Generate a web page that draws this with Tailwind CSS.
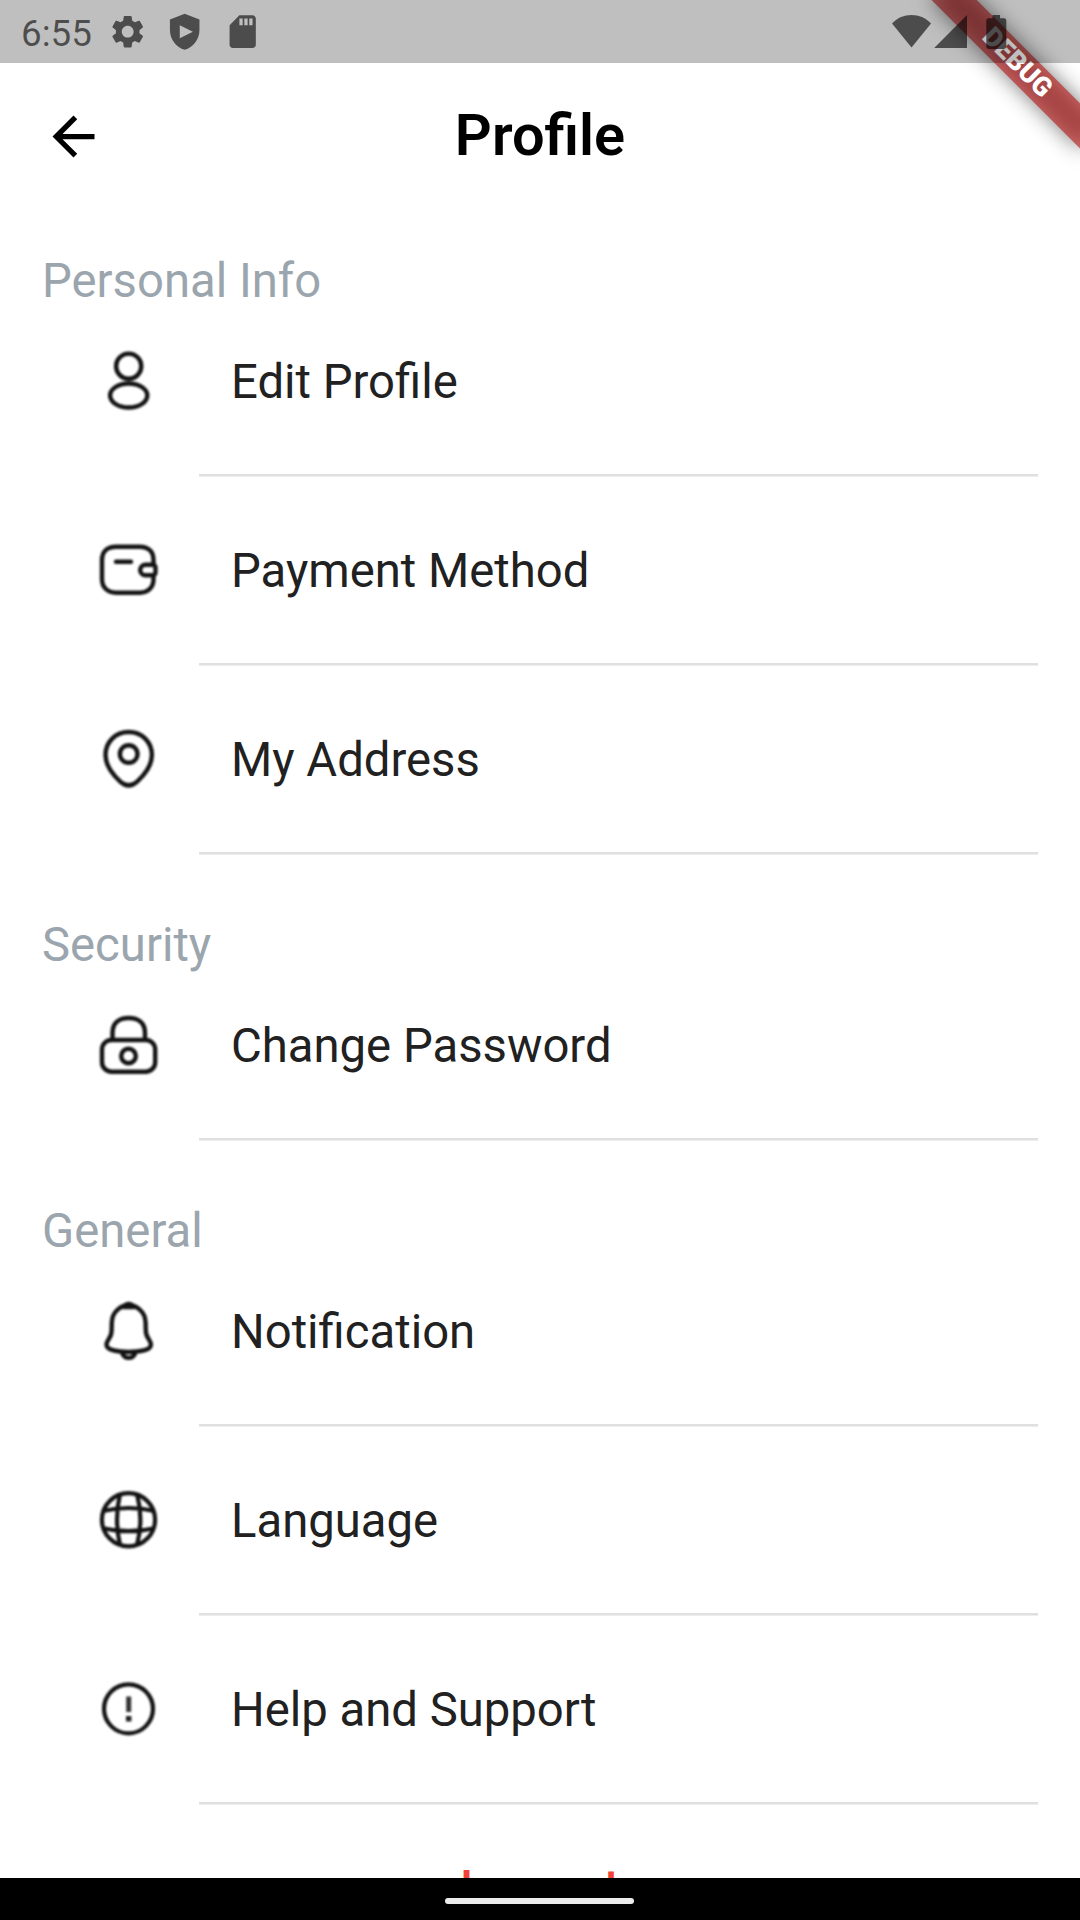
<!DOCTYPE html>
<html lang="en">
<head>
<meta charset="utf-8">
<title>Profile</title>
<script src="https://cdn.jsdelivr.net/npm/@tailwindcss/browser@4"></script>
</head>
<body class="bg-white">
<div class="relative flex h-[1920px] w-[1080px] flex-col overflow-hidden bg-white font-[Roboto,sans-serif] text-[47.25px] leading-[56px] text-[#212121]">

  <!-- Debug ribbon -->
  <div class="absolute left-[975px] top-[73px] h-[31.5px] w-[210px] origin-[105px_-73px] rotate-45">
    <div class="absolute inset-0 bg-black/50 blur-[10.4px]"></div>
    <div class="absolute inset-0 flex items-center justify-center bg-[#b71c1c]/63 text-[26.8px] leading-none font-black text-white">DEBUG</div>
  </div>

  <!-- Status bar -->
  <div class="relative flex h-[63px] shrink-0 items-center bg-black/25 pl-[21px] text-black/60">
    <span class="w-[86.5px] pt-[3px] text-[36.75px] leading-[43px]">6:55</span>
    <svg class="size-[39.4px]" viewBox="0 0 24 24" fill="currentColor"><path d="M19.14 12.94c.04-.3.06-.61.06-.94 0-.32-.02-.64-.07-.94l2.03-1.58c.18-.14.23-.41.12-.61l-1.92-3.32c-.12-.22-.37-.29-.59-.22l-2.39.96c-.5-.38-1.03-.7-1.62-.94l-.36-2.54c-.04-.24-.24-.41-.48-.41h-3.84c-.24 0-.43.17-.47.41l-.36 2.54c-.59.24-1.13.57-1.62.94l-2.39-.96c-.22-.08-.47 0-.59.22L2.74 8.87c-.12.21-.08.47.12.61l2.03 1.58c-.05.3-.09.63-.09.94s.02.64.07.94l-2.03 1.58c-.18.14-.23.41-.12.61l1.92 3.32c.12.22.37.29.59.22l2.39-.96c.5.38 1.03.7 1.62.94l.36 2.54c.05.24.24.41.48.41h3.84c.24 0 .44-.17.47-.41l.36-2.54c.59-.24 1.13-.56 1.62-.94l2.39.96c.22.08.47 0 .59-.22l1.92-3.32c.12-.22.07-.47-.12-.61l-2.01-1.58zM12 15.6c-1.98 0-3.6-1.62-3.6-3.6s1.62-3.6 3.6-3.6 3.6 1.62 3.6 3.6-1.62 3.6-3.6 3.6z"/></svg>
    <svg class="ml-[18.6px] size-[39.4px]" viewBox="0 0 24 24" fill="currentColor" fill-rule="evenodd"><path d="M12 1 3 4.600v6.400c0 5.550 3.840 10.740 9 12 5.160-1.260 9-6.450 9-12V4.600zM9 8v8l8-4z"/></svg>
    <svg class="ml-[18.6px] size-[39.4px]" viewBox="0 0 24 24" fill="currentColor"><path d="M18 2h-8L4.020 8 4 20c0 1.100.9 2 2 2h12c1.100 0 2-.9 2-2V4c0-1.100-.9-2-2-2zm-6 6h-2V4h2v4zm3 0h-2V4h2v4zm3 0h-2V4h2v4z"/></svg>
    <div class="ml-auto flex items-center pr-[73px] pb-[2px]">
      <svg class="h-[36px] w-[40px]" viewBox="0 0 40 36" fill="currentColor"><path d="M19.500 34.500 0 10.500C5.500 4.800 12 2 19.500 2s14 2.800 19.500 8.500z"/></svg>
      <svg class="ml-[2px] h-[36px] w-[34px]" viewBox="0 0 34 36" fill="currentColor"><path d="M33 2v33H.2z"/></svg>
      <svg class="ml-[18px] h-[36px] w-[21px]" viewBox="0 0 21 36" fill="currentColor"><path d="M6.500 2h7.500v3.300h4a2.300 2.300 0 0 1 2.300 2.300v26a2.300 2.300 0 0 1-2.300 2.300H2.600a2.300 2.300 0 0 1-2.300-2.300v-26a2.300 2.300 0 0 1 2.300-2.300h3.900z"/></svg>
    </div>
  </div>

  <!-- App bar -->
  <header class="grid h-[147px] shrink-0 grid-cols-[1fr_auto_1fr] items-center px-[42px]">
    <svg class="size-[63px]" viewBox="0 0 24 24" fill="#000"><path d="M20 11H7.830l5.590-5.590L12 4l-8 8 8 8 1.410-1.410L7.830 13H20v-2z"/></svg>
    <h1 class="pb-[4px] text-[57.75px] leading-[68px] font-semibold text-black">Profile</h1>
    <span></span>
  </header>

  <main class="flex h-[1668px] shrink-0 flex-col overflow-hidden pt-[43px]">
    <section class="flex flex-col">
      <h2 class="px-[42px] text-[#9ba5ad]">Personal Info</h2>
      <div class="mt-[15px] flex flex-col gap-9">
        <div>
          <div class="flex h-[113px] items-center pl-[97px]">
            <svg class="size-[63px] blur-[0.8px]" viewBox="0 0 63 63" fill="none" stroke="#111" stroke-width="4.400"><circle cx="31.700" cy="17.200" r="12.600"/><ellipse cx="31.700" cy="46.500" rx="18.600" ry="12"/></svg>
            <span class="ml-[71px] pt-[2px]">Edit Profile</span>
          </div>
          <div class="mt-[37px] mr-[42px] ml-[199px] h-[3px] border-b border-[#ededed] bg-[#e0e0e0]"></div>
        </div>
        <div>
          <div class="flex h-[113px] items-center pl-[97px]">
            <svg class="size-[63px] blur-[0.8px]" viewBox="0 0 63 63" fill="none" stroke="#111" stroke-width="4.400"><path d="M56.500 26V22C56.500 13 50.500 8.700 43 8.700H19C10.500 8.700 5 13.500 5 22v19C5 49.500 10.500 54.700 19 54.700h24c7.500 0 13.500-4.700 13.500-13.700v-4"/><path d="M48.500 26.700h7.200a2.800 2.800 0 0 1 2.800 2.800v5a2.800 2.800 0 0 1-2.800 2.800h-7.200a5.300 5.300 0 0 1 0-10.600z"/><path d="M19 23.700h15" stroke-linecap="round"/></svg>
            <span class="ml-[71px] pt-[2px]">Payment Method</span>
          </div>
          <div class="mt-[37px] mr-[42px] ml-[199px] h-[3px] border-b border-[#ededed] bg-[#e0e0e0]"></div>
        </div>
        <div>
          <div class="flex h-[113px] items-center pl-[97px]">
            <svg class="size-[63px] blur-[0.8px]" viewBox="0 0 63 63" fill="none" stroke="#111" stroke-width="4.400"><path d="M31.700 5C18.500 5 8.500 15 8.500 28c0 10.500 7.500 20 15 26.800 5.500 4.800 10.900 4.800 16.400 0 7.500-6.800 15-16.300 15-26.800 0-13-10-23-23.200-23z"/><circle cx="31.700" cy="27" r="8.800"/></svg>
            <span class="ml-[71px] pt-[2px]">My Address</span>
          </div>
          <div class="mt-[37px] mr-[42px] ml-[199px] h-[3px] border-b border-[#ededed] bg-[#e0e0e0]"></div>
        </div>
      </div>
    </section>

    <section class="mt-[62px] flex flex-col">
      <h2 class="px-[42px] text-[#9ba5ad]">Security</h2>
      <div class="mt-[15px]">
        <div class="flex h-[113px] items-center pl-[97px]">
          <svg class="size-[63px] blur-[0.8px]" viewBox="0 0 63 63" fill="none" stroke="#111" stroke-width="4.400"><path d="M15.500 26V20C15.500 10 22 5 31.700 5S48 10 48 20v6"/><rect x="5" y="27" width="53.200" height="31.700" rx="9.500"/><circle cx="31.500" cy="43" r="7.300"/></svg>
          <span class="ml-[71px] pt-[2px]">Change Password</span>
        </div>
        <div class="mt-[37px] mr-[42px] ml-[199px] h-[3px] border-b border-[#ededed] bg-[#e0e0e0]"></div>
      </div>
    </section>

    <section class="mt-[62px] flex flex-col">
      <h2 class="px-[42px] text-[#9ba5ad]">General</h2>
      <div class="mt-[15px] flex flex-col gap-9">
        <div>
          <div class="flex h-[113px] items-center pl-[97px]">
            <svg class="size-[63px] blur-[0.8px]" viewBox="0 0 63 63" fill="none" stroke="#111" stroke-width="4.400" stroke-linejoin="round"><path d="M31.700 6C23 6.500 15.500 13.500 14.900 22c-.5 5 .3 9.500-.9 13.500-1.200 4-4.500 6.500-4.500 10 0 6 12 7.500 22.200 7.500s22.200-1.500 22.200-7.500c0-3.500-3.300-6-4.500-10-1.200-4-.4-8.500-.9-13.500C47.900 13.500 40.400 6.500 31.700 6z"/><path d="M26.500 8c3-4 7.400-4 10.400 0z" fill="#111"/><path d="M25 54c2.500 6.500 10.900 6.500 13.400 0"/></svg>
            <span class="ml-[71px] pt-[2px]">Notification</span>
          </div>
          <div class="mt-[37px] mr-[42px] ml-[199px] h-[3px] border-b border-[#ededed] bg-[#e0e0e0]"></div>
        </div>
        <div>
          <div class="flex h-[113px] items-center pl-[97px]">
            <svg class="size-[63px] blur-[0.8px]" viewBox="0 0 63 63" fill="none" stroke="#111" stroke-width="4.200"><circle cx="31.500" cy="31.800" r="26.600"/><path d="M23 6C19 23 19 40 23 57M40 6c4.500 17 4.500 34 0 51M6 23c17-4 34.400-4 51.400 0M6 40.200c17 4 34.400 4 51.400 0"/></svg>
            <span class="ml-[71px] pt-[2px]">Language</span>
          </div>
          <div class="mt-[37px] mr-[42px] ml-[199px] h-[3px] border-b border-[#ededed] bg-[#e0e0e0]"></div>
        </div>
        <div>
          <div class="flex h-[113px] items-center pl-[97px]">
            <svg class="size-[63px] blur-[0.8px]" viewBox="0 0 63 63" fill="none" stroke="#111" stroke-width="4.200"><circle cx="31.500" cy="31.800" r="24.500"/><path d="M31.700 19.500v15.500" stroke="#333" stroke-width="5"/><path d="M31.700 39v5.500" stroke="#222" stroke-width="5.500"/></svg>
            <span class="ml-[71px] pt-[2px]">Help and Support</span>
          </div>
          <div class="mt-[37px] mr-[42px] ml-[199px] h-[3px] border-b border-[#ededed] bg-[#e0e0e0]"></div>
        </div>
      </div>
    </section>

    <div class="mt-[55px] shrink-0 text-center font-medium text-[#f44336]">Log out</div>
  </main>

  <!-- Gesture bar -->
  <div class="flex h-[42px] shrink-0 items-center justify-center bg-black pt-[4px] pr-px">
    <div class="h-[6px] w-[189px] rounded-full bg-[#ececec]"></div>
  </div>
</div>
</body>
</html>
